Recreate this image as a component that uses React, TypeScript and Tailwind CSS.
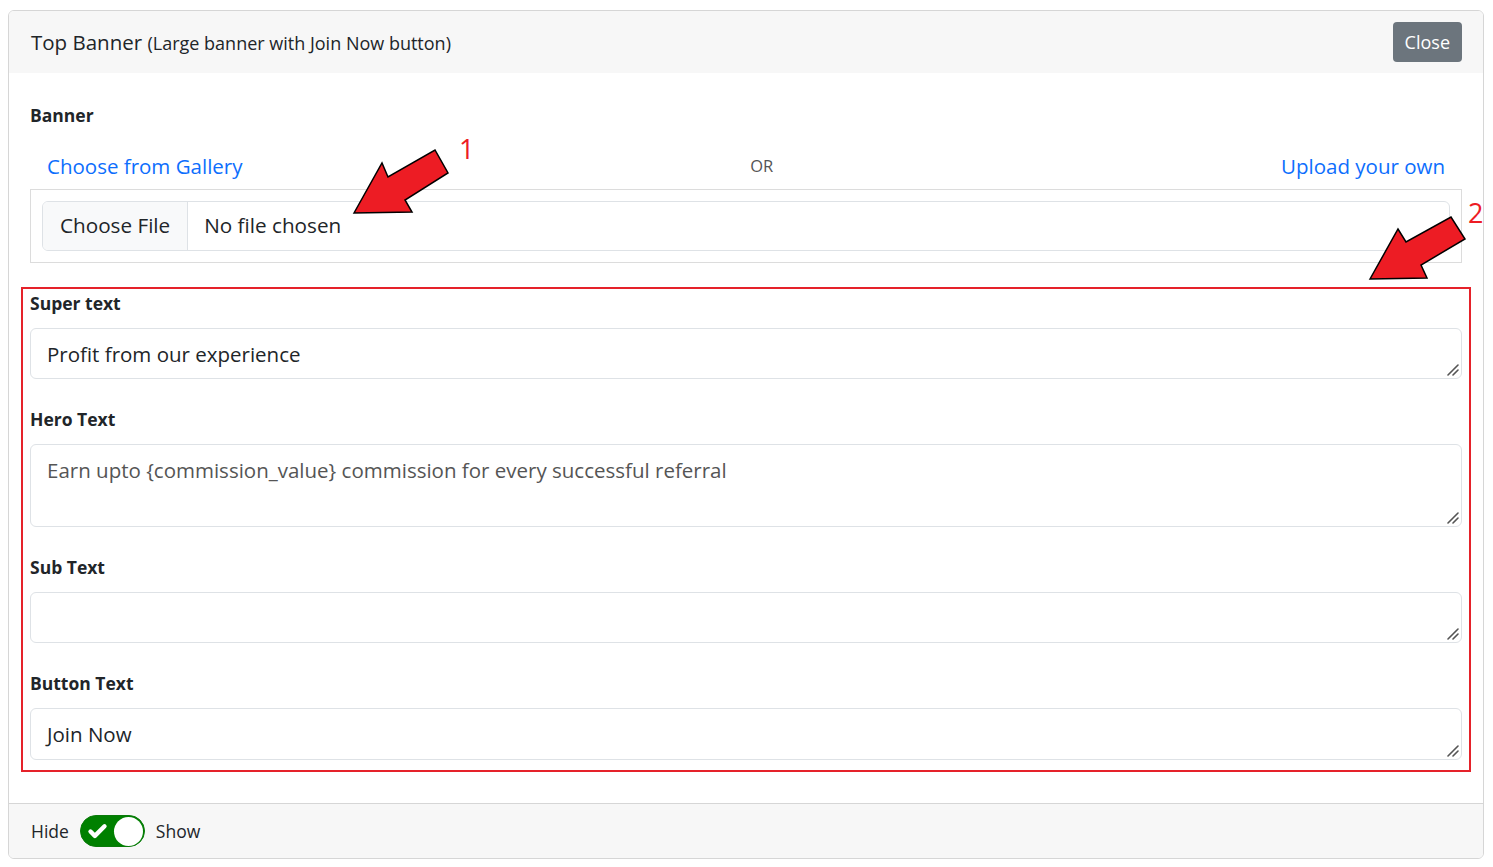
import { Check } from 'lucide-react';

const fields = [
  { label: 'Super text', value: 'Profit from our experience', rows: 'h-[51px]', muted: false },
  { label: 'Hero Text', value: 'Earn upto {commission_value} commission for every successful referral', rows: 'h-[83px]', muted: true },
  { label: 'Sub Text', value: '', rows: 'h-[51px]', muted: false },
  { label: 'Button Text', value: 'Join Now', rows: 'h-[52px]', muted: false },
];

function Arrows() {
  return (
    <svg className="pointer-events-none absolute left-0 top-0" width="1493" height="867">
      <polygon
        points="354,213 382,163 388,177 435,150 448,173 405,200 412,212"
        fill="#ed1c24"
        stroke="#000"
        strokeWidth="1.5"
      />
      <polygon
        points="1370,279 1398,229 1406,242 1451,217 1465,239 1421,265 1427,278"
        fill="#ed1c24"
        stroke="#000"
        strokeWidth="1.5"
      />
      <text x="459" y="159" fill="#ed1c24" fontSize="27" fontFamily="Open Sans, sans-serif">1</text>
      <text x="1468" y="223" fill="#ed1c24" fontSize="27" fontFamily="Open Sans, sans-serif">2</text>
    </svg>
  );
}

function Grip() {
  return (
    <svg className="pointer-events-none absolute bottom-[3px] right-[3px]" width="12" height="12" viewBox="0 0 12 12">
      <path d="M1 11L11 1M6 11L11 6" stroke="#555" strokeWidth="1.6" strokeLinecap="round" />
    </svg>
  );
}

export default function App() {
  return (
    <div className="relative h-[867px] w-[1493px] bg-white pt-[10px] pl-[8px] pr-[9px] font-['Open_Sans',sans-serif] text-[#212529]">
      <div className="overflow-hidden rounded-md border border-[#d6d6d6]">
        <div className="flex h-[62px] items-center justify-between bg-[#f7f7f7] pl-[22px] pr-[21px]">
          <h2 className="text-[20.5px] leading-none">
            Top Banner <span className="text-[18px]">(Large banner with Join Now button)</span>
          </h2>
          <button className="h-10 rounded bg-[#6c757d] px-3 text-[18px] text-white">Close</button>
        </div>

        <div className="px-[21px] pl-[21px] pt-[30px] pb-[31px]">
          <div className="h-6 text-[17.5px] font-bold leading-6">Banner</div>

          <div className="mt-6 flex h-[30px] items-center justify-between px-[17px]">
            <a className="text-[20.5px] text-[#0d6efd]">Choose from Gallery</a>
            <span className="text-[16.5px] text-[#555]">OR</span>
            <a className="text-[20.5px] text-[#0d6efd]">Upload your own</a>
          </div>

          <div className="mt-2 border border-[#dcdcdc] p-[11px]">
            <div className="flex h-[50px] overflow-hidden rounded-md border border-[#dee2e6] text-[20.7px]">
              <div className="flex items-center border-r border-[#dee2e6] bg-[#f8f9fa] px-[17px]">Choose File</div>
              <div className="flex items-center px-4">No file chosen</div>
            </div>
          </div>

          <div className="-mx-[9px] mt-[24px] border-2 border-[#e5222a] px-[7px] pt-[2px] pb-[10px]">
            {fields.map((f, i) => (
              <div key={f.label} className={i > 0 ? 'mt-[28px]' : ''}>
                <div className="h-6 text-[17.5px] font-bold leading-6">{f.label}</div>
                <div className="relative mt-[13px]">
                  <textarea
                    readOnly
                    defaultValue={f.value}
                    className={`block w-full resize-none rounded-md border border-[#dee2e6] px-4 py-[10px] text-[20.5px] leading-[30px] outline-none ${f.rows} ${f.muted ? 'text-[#555]' : 'text-[#212529]'}`}
                  />
                  <Grip />
                </div>
              </div>
            ))}
          </div>
        </div>

        <div className="flex h-[55px] items-center gap-[11px] border-t border-[#d6d6d6] bg-[#f7f7f7] px-[22px] text-[17.5px]">
          <span>Hide</span>
          <div className="flex h-[32px] w-[65px] items-center justify-between rounded-full border border-[#0a7a0a] bg-[#008000] pl-[6px] pr-px">
            <Check className="h-[21px] w-[21px] text-white" strokeWidth={5} />
            <div className="h-[29px] w-[29px] rounded-full bg-white" />
          </div>
          <span>Show</span>
        </div>
      </div>
      <Arrows />
    </div>
  );
}
